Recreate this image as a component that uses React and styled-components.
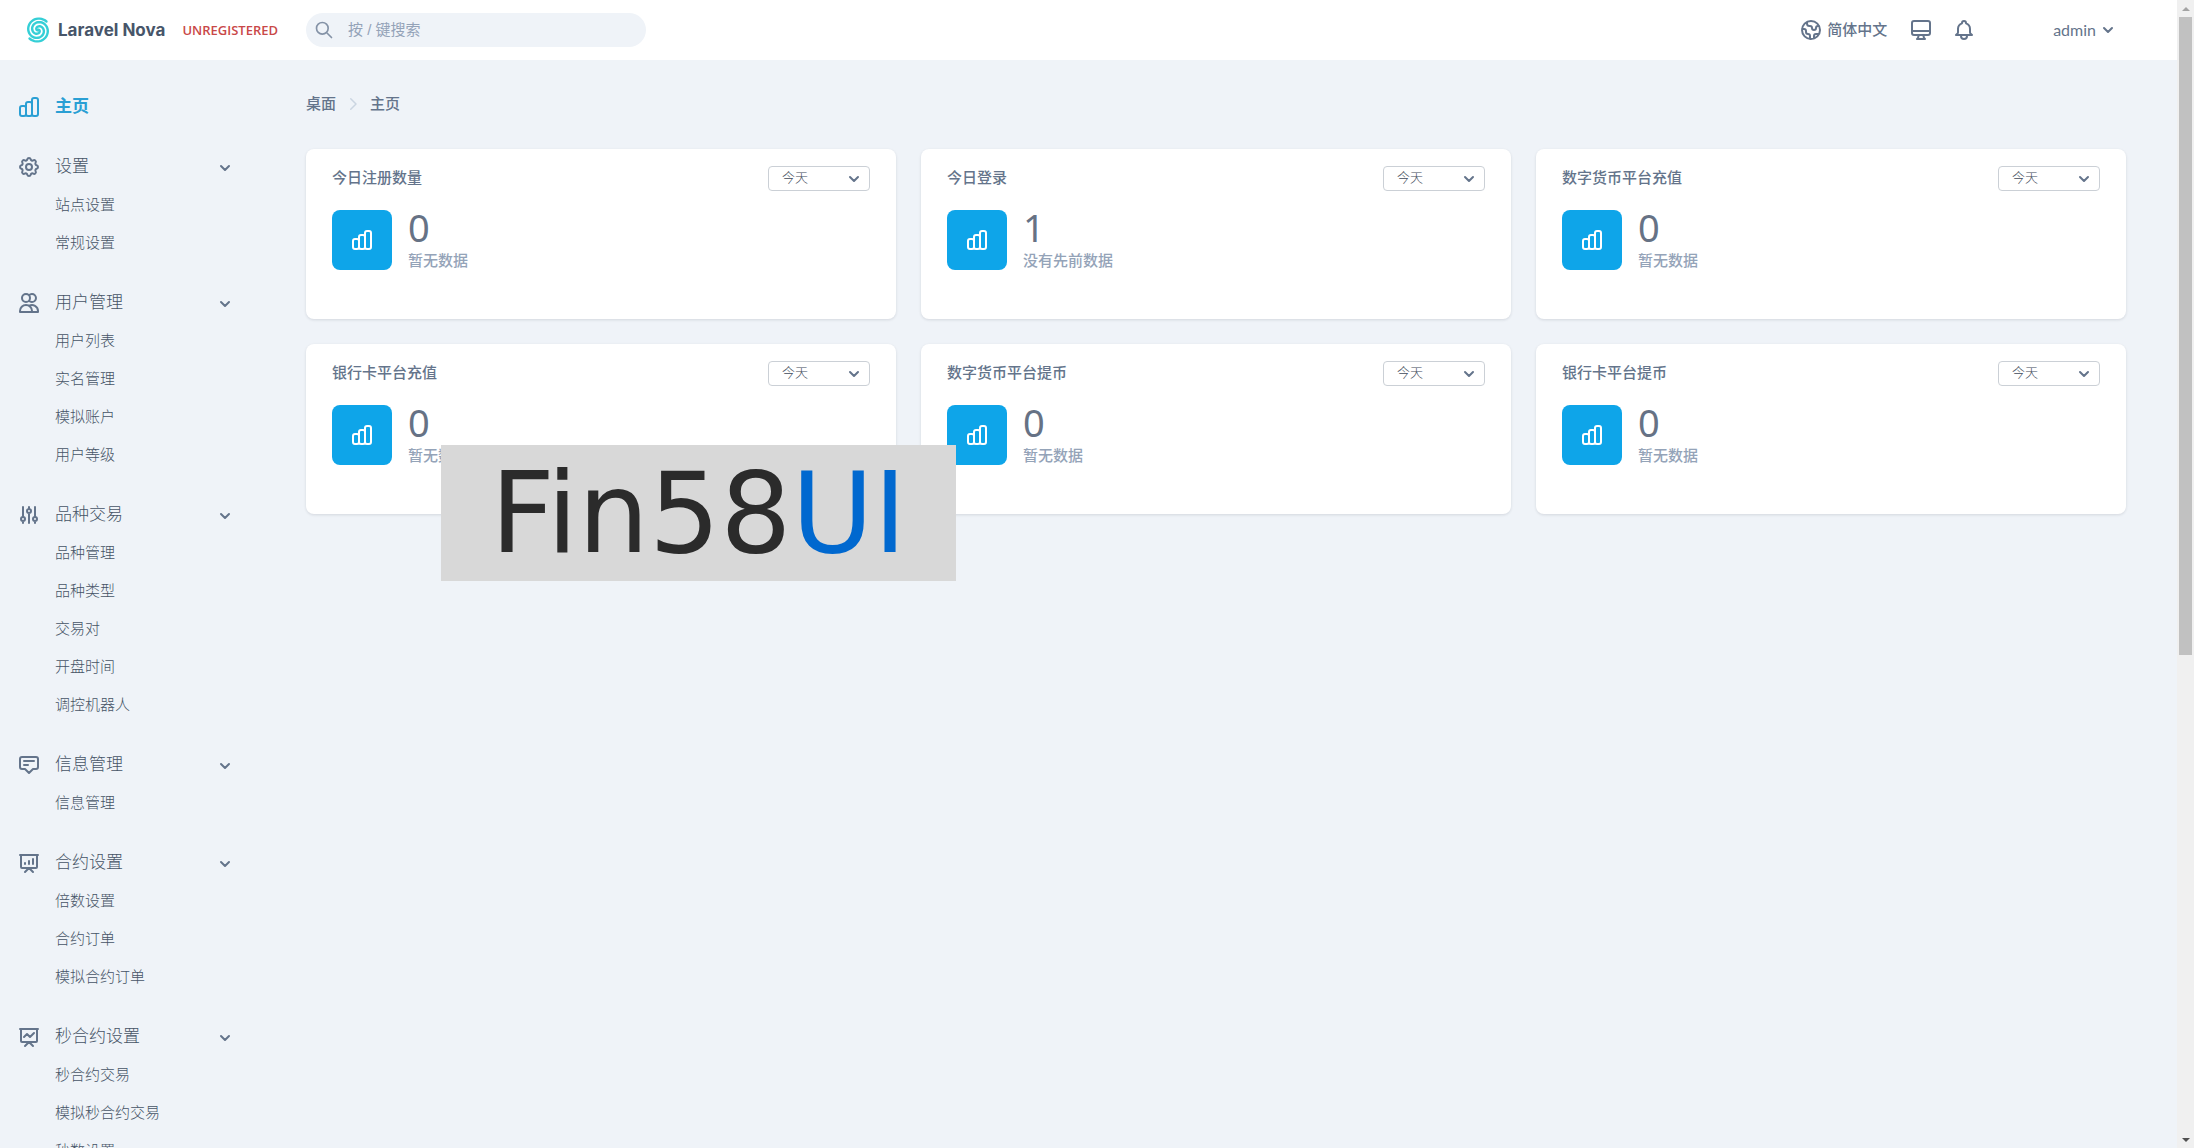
import React from 'react';
import styled, { createGlobalStyle } from 'styled-components';
import {
  HiOutlineAdjustments,
  HiOutlineAnnotation,
  HiOutlineBell,
  HiOutlineChartBar,
  HiOutlineChevronRight,
  HiOutlineCog,
  HiOutlineDesktopComputer,
  HiOutlineGlobe,
  HiOutlinePresentationChartBar,
  HiOutlinePresentationChartLine,
  HiOutlineSearch,
  HiOutlineUsers,
} from 'react-icons/hi';

const GlobalStyle = createGlobalStyle`
  * {
    box-sizing: border-box;
  }

  body {
    margin: 0;
    background: #eff3f8;
    color: #64748b;
    font-family: 'Liberation Sans', 'Noto Sans CJK SC', sans-serif;
    font-size: 15px;
    line-height: 24px;
  }

  button,
  input,
  select {
    font: inherit;
    color: inherit;
  }
`;

const Page = styled.div`
  display: flex;
  height: 100vh;
  overflow: hidden;
`;

const Shell = styled.div`
  flex: 1;
  min-width: 0;
  display: flex;
  flex-direction: column;
`;

const TopBar = styled.header`
  flex: none;
  display: flex;
  align-items: center;
  height: 60px;
  padding-right: 63px;
  background: #fff;
`;

const Brand = styled.a`
  display: flex;
  align-items: center;
  width: 306px;
  padding-left: 25px;
  color: #475569;
  text-decoration: none;
`;

const BrandName = styled.span`
  margin: 0 17px 0 7px;
  font-family: Inter, sans-serif;
  font-size: 17px;
  font-weight: 700;
  white-space: nowrap;
`;

const Unregistered = styled.span`
  color: #c94848;
  font-family: 'Open Sans', sans-serif;
  font-size: 13px;
  font-weight: 600;
`;

const SearchBox = styled.label`
  display: flex;
  align-items: center;
  gap: 14px;
  width: 340px;
  height: 34px;
  padding: 0 8px;
  border-radius: 17px;
  background: #eff3f8;
  color: #8492a6;
`;

const SearchInput = styled.input`
  flex: 1;
  min-width: 0;
  height: 24px;
  padding: 0;
  border: 0;
  outline: 0;
  background: transparent;

  &::placeholder {
    color: #94a3b8;
    opacity: 1;
  }
`;

const Tools = styled.div`
  display: flex;
  align-items: center;
  margin-left: auto;
`;

const ToolButton = styled.button`
  display: flex;
  align-items: center;
  gap: ${({ $gap }) => $gap || 4}px;
  margin-left: ${({ $space }) => $space || 0}px;
  padding: 0;
  border: 0;
  background: transparent;
  font-weight: ${({ $bold }) => ($bold ? 500 : 400)};
  cursor: pointer;
`;

const UserName = styled.span`
  font-family: Lato, sans-serif;
  font-size: 16px;
  line-height: 22px;
`;

const Body = styled.div`
  flex: 1;
  min-height: 0;
  display: flex;
`;

const Sidebar = styled.nav`
  flex: none;
  width: 256px;
  padding: 28px 23px 0 17px;
  overflow: hidden;
  color: #465366;
`;

const MenuSection = styled.section`
  margin-bottom: 22px;
`;

const MenuHead = styled.button`
  display: flex;
  align-items: center;
  gap: 14px;
  width: 100%;
  height: 38px;
  padding: 0;
  border: 0;
  background: transparent;
  font-size: 17px;
  font-weight: 300;
  cursor: pointer;

  svg {
    color: #64748b;
  }

  svg:last-child {
    margin: 2px 2px 0 auto;
  }
`;

const HomeLink = styled.a`
  display: flex;
  align-items: center;
  gap: 14px;
  height: 38px;
  margin-bottom: 22px;
  color: #2a9fd4;
  font-size: 17px;
  font-weight: 700;
  text-decoration: none;
`;

const MenuList = styled.ul`
  margin: 0;
  padding: 0 0 0 38px;
  list-style: none;
`;

const MenuLink = styled.a`
  display: block;
  color: inherit;
  font-weight: 300;
  line-height: 38px;
  text-decoration: none;
  white-space: nowrap;
`;

const Content = styled.main`
  flex: 1;
  min-width: 0;
  padding: 32px 51px 0 50px;
`;

const Breadcrumbs = styled.nav`
  display: flex;
  align-items: center;
  gap: 8px;
  height: 24px;
  margin-bottom: 33px;
  font-weight: 500;

  svg {
    color: #cbd5e1;
  }
`;

const Crumb = styled.a`
  color: inherit;
  text-decoration: none;
`;

const Cards = styled.div`
  display: grid;
  grid-template-columns: repeat(3, 1fr);
  gap: 25px;
`;

const Card = styled.section`
  height: 170px;
  padding: 17px 26px;
  border-radius: 8px;
  background: #fff;
  box-shadow: 0 1px 3px rgba(15, 23, 42, 0.12);
`;

const CardHead = styled.div`
  display: flex;
  align-items: flex-start;
  justify-content: space-between;
  height: 25px;
  margin-bottom: 19px;
`;

const CardTitle = styled.h3`
  margin: 0;
  font-size: 15px;
  font-weight: 500;
  line-height: 24px;
`;

const RangeBox = styled.span`
  display: grid;
  align-items: center;
  width: 102px;
  height: 25px;

  > * {
    grid-area: 1 / 1;
  }

  svg {
    justify-self: end;
    margin-right: 10px;
    pointer-events: none;
  }
`;

const RangeSelect = styled.select`
  appearance: none;
  width: 100%;
  height: 25px;
  padding: 0 24px 2px 13px;
  border: 1px solid #cbd0d6;
  border-radius: 4px;
  background: #fff;
  color: #3f4a5a;
  font-size: 13px;
  font-weight: 300;
  line-height: 20px;
`;

const Metric = styled.div`
  display: flex;
  gap: 16px;
`;

const MetricIcon = styled.span`
  display: flex;
  align-items: center;
  justify-content: center;
  width: 60px;
  height: 60px;
  border-radius: 8px;
  background: #0ea5e9;
  color: #fff;
`;

const MetricValue = styled.p`
  margin: 0;
  color: #667285;
  font-family: 'Noto Sans', sans-serif;
  font-size: 38px;
  line-height: 34px;
`;

const MetricNote = styled.p`
  margin: 5px 0 0;
  color: #94a3b8;
  font-weight: 500;
  line-height: 24px;
`;

const Watermark = styled.div`
  position: absolute;
  top: 445px;
  left: 441px;
  display: flex;
  align-items: center;
  justify-content: center;
  width: 515px;
  height: 136px;
  background: #d8d8d8;
  color: #2b2b2b;
  font-family: 'DejaVu Sans', sans-serif;
  font-size: 112px;
  line-height: 136px;
`;

const WatermarkAccent = styled.span`
  color: #0068cf;
`;

const ScrollTrack = styled.div`
  flex: none;
  display: flex;
  flex-direction: column;
  align-items: center;
  justify-content: space-between;
  width: 17px;
  padding: 7px 0 6px;
  background: #f0f0f0;
`;

const ScrollThumb = styled.div`
  flex: 0 0 calc(56% + 2px);
  width: 13px;
  margin: 6px 0 auto;
  background: #c1c1c1;
`;

const menu = [
  { title: '设置', icon: HiOutlineCog, items: ['站点设置', '常规设置'] },
  { title: '用户管理', icon: HiOutlineUsers, items: ['用户列表', '实名管理', '模拟账户', '用户等级'] },
  {
    title: '品种交易',
    icon: HiOutlineAdjustments,
    items: ['品种管理', '品种类型', '交易对', '开盘时间', '调控机器人'],
  },
  { title: '信息管理', icon: HiOutlineAnnotation, items: ['信息管理'] },
  {
    title: '合约设置',
    icon: HiOutlinePresentationChartBar,
    items: ['倍数设置', '合约订单', '模拟合约订单'],
  },
  {
    title: '秒合约设置',
    icon: HiOutlinePresentationChartLine,
    items: ['秒合约交易', '模拟秒合约交易', '秒数设置'],
  },
];

const metrics = [
  { title: '今日注册数量', value: 0, note: '暂无数据' },
  { title: '今日登录', value: 1, note: '没有先前数据' },
  { title: '数字货币平台充值', value: 0, note: '暂无数据' },
  { title: '银行卡平台充值', value: 0, note: '暂无数据' },
  { title: '数字货币平台提币', value: 0, note: '暂无数据' },
  { title: '银行卡平台提币', value: 0, note: '暂无数据' },
];

const Caret = () => (
  <svg width="12" height="8" viewBox="0 0 12 8" fill="none" stroke="currentColor" strokeWidth="2" strokeLinecap="round" strokeLinejoin="round">
    <path d="M2 2l4 4 4-4" />
  </svg>
);

// one arm of the swirl, wound from the rim into the centre
const swirlArm = (start) =>
  Array.from({ length: 61 }, (_, i) => {
    const t = i / 60;
    const angle = start - t * Math.PI * 3;
    const radius = 12 * (1 - t ** 1.2);
    return `${13 + radius * Math.cos(angle)},${13 + radius * Math.sin(angle)}`;
  }).join(' ');

const NovaLogo = () => (
  <svg width="26" height="26" viewBox="0 0 26 26" fill="none" stroke="#35cfd6" strokeWidth="2.4" strokeLinecap="round">
    <polyline points={swirlArm(-Math.PI / 4)} />
    <polyline points={swirlArm((Math.PI * 3) / 4)} />
  </svg>
);

const MetricCard = ({ title, value, note }) => (
  <Card>
    <CardHead>
      <CardTitle>{title}</CardTitle>
      <RangeBox>
        <RangeSelect aria-label={title} defaultValue="today">
          <option value="today">今天</option>
        </RangeSelect>
        <Caret />
      </RangeBox>
    </CardHead>
    <Metric>
      <MetricIcon>
        <HiOutlineChartBar size={24} />
      </MetricIcon>
      <div>
        <MetricValue>{value}</MetricValue>
        <MetricNote>{note}</MetricNote>
      </div>
    </Metric>
  </Card>
);

const App = () => {
  return (
    <>
      <GlobalStyle />
      <Page>
        <Shell>
          <TopBar>
            <Brand href="#">
              <NovaLogo />
              <BrandName>Laravel Nova</BrandName>
              <Unregistered>UNREGISTERED</Unregistered>
            </Brand>
            <SearchBox>
              <HiOutlineSearch size={20} />
              <SearchInput type="search" placeholder="按 / 键搜索" aria-label="搜索" />
            </SearchBox>
            <Tools>
              <ToolButton $bold>
                <HiOutlineGlobe size={24} />
                简体中文
              </ToolButton>
              <ToolButton $space={22} aria-label="主题">
                <HiOutlineDesktopComputer size={24} />
              </ToolButton>
              <ToolButton $space={19} aria-label="通知">
                <HiOutlineBell size={24} />
              </ToolButton>
              <ToolButton $space={77} $gap={6}>
                <UserName>admin</UserName>
                <Caret />
              </ToolButton>
            </Tools>
          </TopBar>
          <Body>
            <Sidebar>
              <HomeLink href="#">
                <HiOutlineChartBar size={24} />
                主页
              </HomeLink>
              {menu.map(({ title, icon: Icon, items }) => (
                <MenuSection key={title}>
                  <MenuHead>
                    <Icon size={24} />
                    {title}
                    <Caret />
                  </MenuHead>
                  <MenuList>
                    {items.map((item) => (
                      <li key={item}>
                        <MenuLink href="#">{item}</MenuLink>
                      </li>
                    ))}
                  </MenuList>
                </MenuSection>
              ))}
            </Sidebar>
            <Content>
              <Breadcrumbs>
                <Crumb href="#">桌面</Crumb>
                <HiOutlineChevronRight size={18} />
                <span>主页</span>
              </Breadcrumbs>
              <Cards>
                {metrics.map((metric) => (
                  <MetricCard key={metric.title} {...metric} />
                ))}
              </Cards>
            </Content>
          </Body>
        </Shell>
        <ScrollTrack>
          <svg width="8" height="4" viewBox="0 0 8 4" fill="#a3a3a3">
            <path d="M4 0l4 4H0z" />
          </svg>
          <ScrollThumb />
          <svg width="8" height="4" viewBox="0 0 8 4" fill="#505050">
            <path d="M4 4L0 0h8z" />
          </svg>
        </ScrollTrack>
      </Page>
      <Watermark>
        <span>
          Fin58<WatermarkAccent>UI</WatermarkAccent>
        </span>
      </Watermark>
    </>
  );
};

export default App;
